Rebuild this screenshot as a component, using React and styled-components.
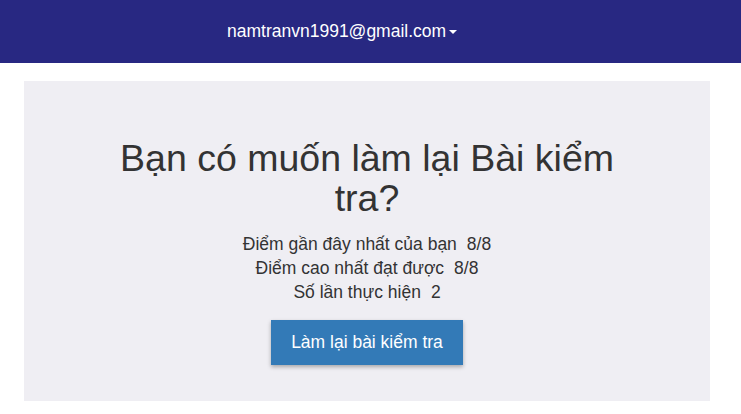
import React from 'react';
import styled, { createGlobalStyle } from 'styled-components';

const GlobalStyle = createGlobalStyle`
  body {
    margin: 0;
    background: #fff;
    font-family: "Liberation Sans", Arial, sans-serif;
    color: #333;
  }
`;

const Header = styled.div`
  height: 63px;
  background-color: #282882;
  display: flex;
  align-items: center;
  padding-left: 227px;
`;

const UserMenu = styled.div`
  color: #fff;
  font-size: 17.5px;
  display: flex;
  align-items: center;
  cursor: pointer;

  .caret {
    margin-left: 3px;
    width: 0;
    height: 0;
    border-left: 4px solid transparent;
    border-right: 4px solid transparent;
    border-top: 4px solid #fff;
  }
`;

const Panel = styled.div`
  margin: 18px 31px 0 24px;
  height: 320px;
  background-color: #efeef3;
  padding: 0 85px;
  box-sizing: border-box;
  display: flex;
  flex-direction: column;
  align-items: center;
  text-align: center;
`;

const Title = styled.h1`
  font-size: 37.5px;
  font-weight: 400;
  line-height: 40px;
  margin: 57px 0 14px;
`;

const Stat = styled.div`
  font-size: 17.5px;
  line-height: 24px;

  span {
    margin-left: 10px;
  }
`;

const RetryButton = styled.button`
  margin-top: 16px;
  height: 45px;
  padding: 0 20px;
  border: none;
  background-color: #337ab7;
  color: #fff;
  font-family: inherit;
  font-size: 17.5px;
  box-shadow: 0 2px 4px rgba(0, 0, 0, 0.3);
  cursor: pointer;
`;

const stats = [
  { label: 'Điểm gần đây nhất của bạn', value: '8/8' },
  { label: 'Điểm cao nhất đạt được', value: '8/8' },
  { label: 'Số lần thực hiện', value: '2' },
];

const App = () => {
  return (
    <>
      <GlobalStyle />
      <Header>
        <UserMenu>
          namtranvn1991@gmail.com
          <div className='caret' />
        </UserMenu>
      </Header>
      <Panel>
        <Title>Bạn có muốn làm lại Bài kiểm tra?</Title>
        {stats.map((s) => (
          <Stat key={s.label}>
            {s.label}
            <span>{s.value}</span>
          </Stat>
        ))}
        <RetryButton>Làm lại bài kiểm tra</RetryButton>
      </Panel>
    </>
  );
};

export default App;
